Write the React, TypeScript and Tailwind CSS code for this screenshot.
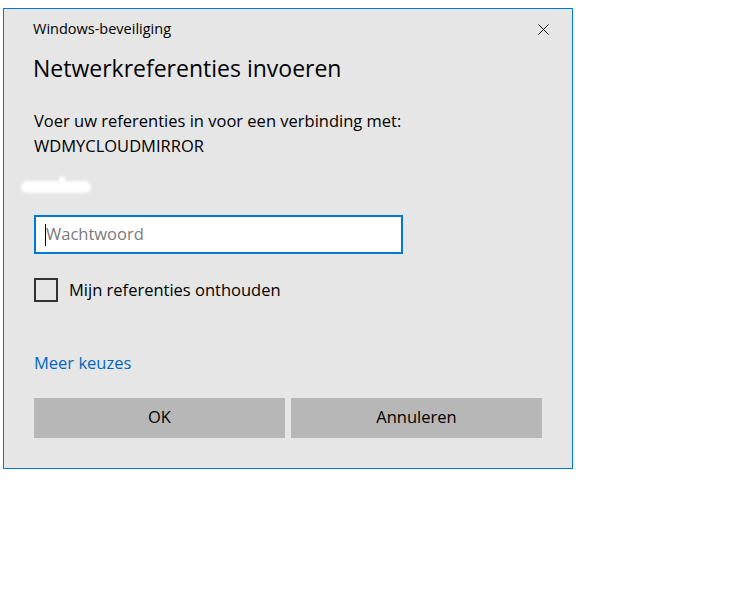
import { X } from 'lucide-react';

export default function App() {
  return (
    <div className="min-h-[597px] bg-white pl-[3px] pt-[8px]" style={{ fontFamily: '"Open Sans", "Noto Sans", sans-serif' }}>
      <div className="relative flex h-[461px] w-[570px] flex-col border border-[#0078d7] bg-[#e6e6e6] pl-[29px] pr-[30px] text-black">
        {/* Title bar */}
        <div className="flex h-[40px] items-center justify-between">
          <span className="text-[14.5px] leading-none">Windows-beveiliging</span>
          <X className="mr-[-11px] h-[19px] w-[19px]" strokeWidth={1.2} />
        </div>

        <h1 className="mt-[5px] text-[23px] font-normal leading-[28px]">Netwerkreferenties invoeren</h1>

        <p className="mt-[26px] pl-px text-[16.5px] leading-[25px]">
          Voer uw referenties in voor een verbinding met:
          <br />
          WDMYCLOUDMIRROR
        </p>

        {/* blurred user name */}
        <div className="relative mt-[23px] -ml-[12px] h-[12px] w-[70px]">
          <div className="absolute inset-0 rounded-full bg-white blur-[1.5px]" />
          <div className="absolute left-[38px] top-[-5px] h-[8px] w-[6px] rounded-full bg-white blur-[1px]" />
        </div>

        <div className="mt-[22px] ml-px flex h-[39px] w-[369px] items-center border-2 border-[#0078d7] bg-white pl-[9px]">
          <span className="h-[22px] w-px bg-black" />
          <span className="text-[16.5px] text-[#7a7a7a]">Wachtwoord</span>
        </div>

        <label className="mt-[24px] ml-px flex items-center gap-[11px]">
          <span className="h-[24px] w-[24px] border-2 border-[#333333]" />
          <span className="text-[16.5px]">Mijn referenties onthouden</span>
        </label>

        <a className="mt-[49px] ml-px text-[16.5px] leading-[22px] text-[#0067c0]">Meer keuzes</a>

        <div className="mt-[24px] ml-px flex gap-[6px]">
          <button className="flex h-[40px] w-[251px] items-center justify-center bg-[#b7b7b7] text-[16.5px]">OK</button>
          <button className="flex h-[40px] w-[251px] items-center justify-center bg-[#b7b7b7] text-[16.5px]">Annuleren</button>
        </div>
      </div>
    </div>
  );
}
